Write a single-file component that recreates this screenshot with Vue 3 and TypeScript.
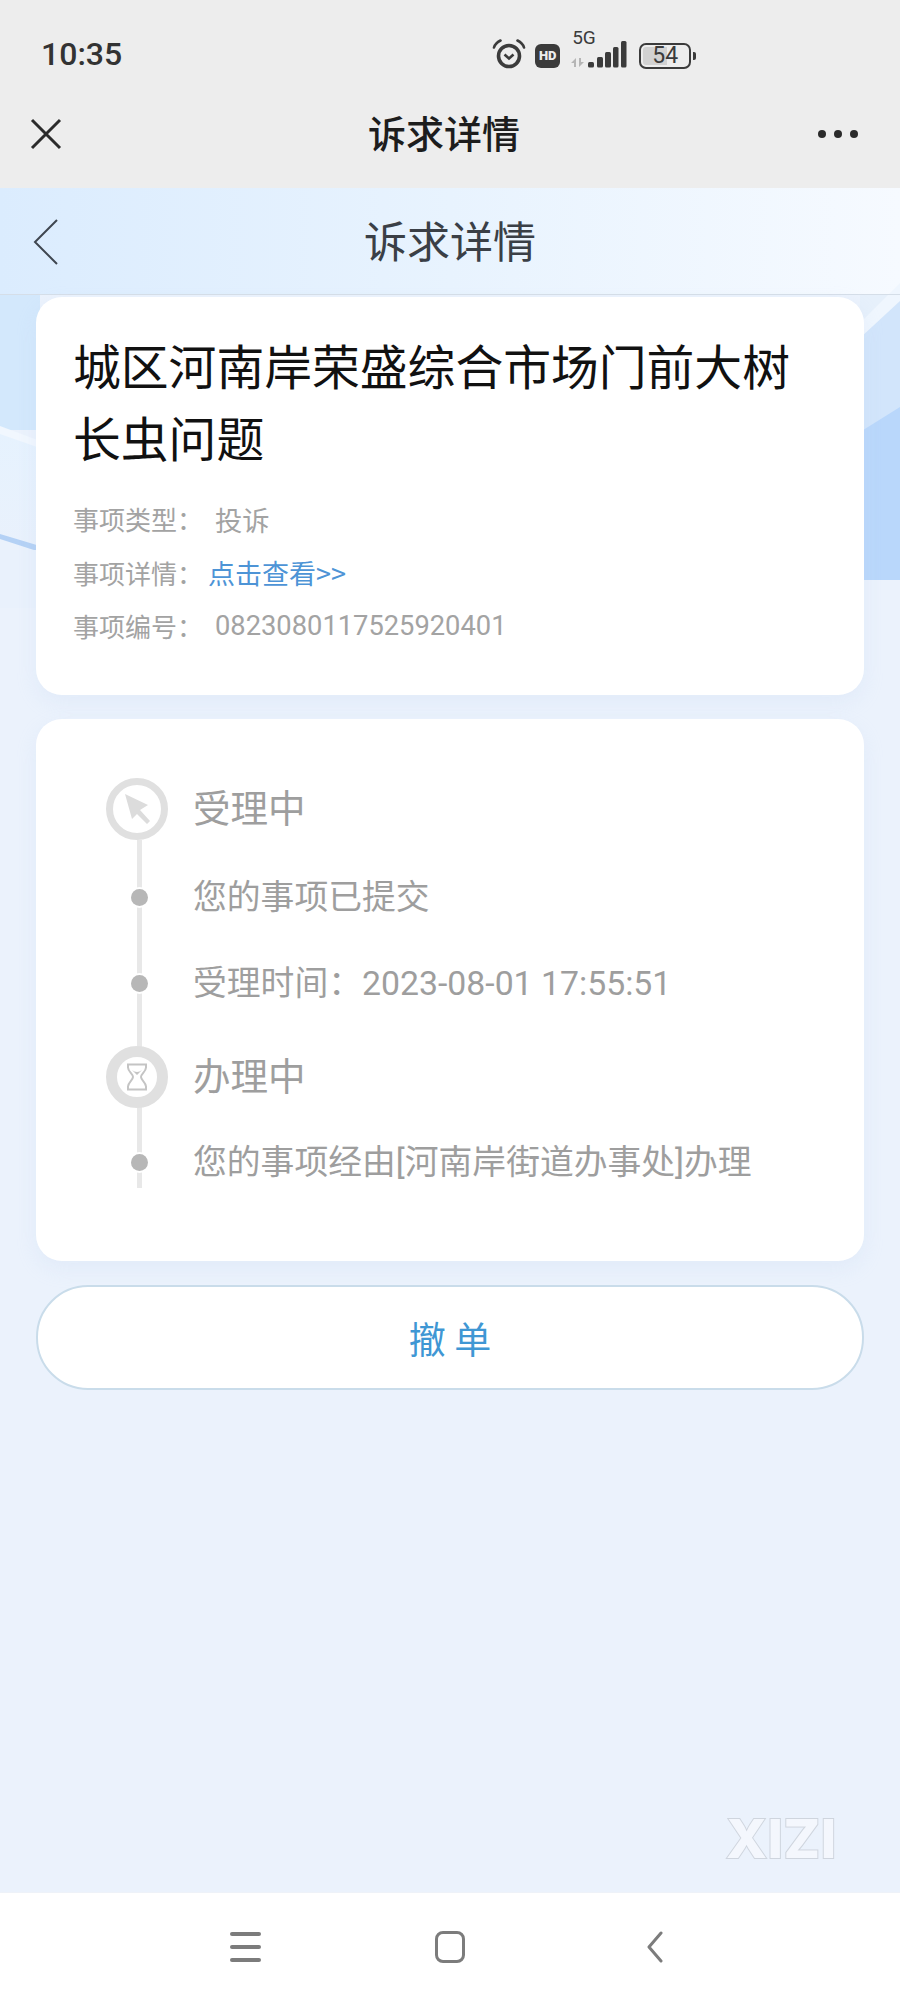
<template>
  <div class="screen">
    <div class="system-top">
      <div class="status-bar">
        <span class="clock">10:35</span>
        <div class="status-icons">
          <svg class="alarm" width="34" height="30" viewBox="0 0 34 30" fill="none" stroke="#3b3b3b">
            <circle cx="17" cy="17" r="10.5" stroke-width="3.6" />
            <path d="M12.5 15.5 17 19.5l4.5-4" stroke-width="2.6" />
            <path d="M2 8.5C3 5 5.5 3 8.5 1.5M32 8.5C31 5 28.5 3 25.5 1.5" stroke-width="2.6" stroke-linecap="round" />
          </svg>
          <span class="hd">HD</span>
          <div class="network">
            <span class="five-g">5G</span>
            <svg width="56" height="27" viewBox="0 0 56 27">
              <path d="M-2 22 3 17V26H1V22ZM11 21 6 26V17H8V21Z" fill="#b5b5b5" />
              <rect x="15" y="21" width="6" height="5.5" rx="1.5" fill="#3b3b3b" />
              <rect x="24" y="16" width="6" height="10.5" rx="1.5" fill="#3b3b3b" />
              <rect x="32" y="11" width="6" height="15.5" rx="1.5" fill="#3b3b3b" />
              <rect x="40" y="6" width="5.5" height="20.5" rx="1.5" fill="#3b3b3b" />
              <rect x="48" y="0" width="5.5" height="26.5" rx="1.5" fill="#3b3b3b" />
            </svg>
          </div>
          <div class="battery">
            <div class="battery-body">
              <div class="battery-fill" :style="{ width: batteryLevel + '%' }"></div>
              <span class="battery-text">{{ batteryLevel }}</span>
            </div>
            <span class="battery-nub"></span>
          </div>
        </div>
      </div>
      <div class="wx-nav">
        <svg width="32" height="32" viewBox="0 0 32 32" stroke="#2b2b2b" stroke-width="3" fill="none">
          <path d="M2 2l28 28M30 2 2 30" />
        </svg>
        <span class="wx-title">诉求详情</span>
        <div class="wx-more"><i></i><i></i><i></i></div>
      </div>
    </div>

    <main class="page">
      <svg class="page-bg" width="900" height="420" viewBox="0 0 900 420">
        <defs>
          <linearGradient id="headBg" x1="0" y1="0" x2="1" y2="0">
            <stop offset="0" stop-color="#dbecfe" />
            <stop offset="0.5" stop-color="#e8f3fe" />
            <stop offset="1" stop-color="#f6faff" />
          </linearGradient>
          <linearGradient id="leftBg" x1="0" y1="0" x2="0" y2="1">
            <stop offset="0" stop-color="#e6f2fe" />
            <stop offset="1" stop-color="#e9f1fc" />
          </linearGradient>
        </defs>
        <rect width="900" height="107" fill="url(#headBg)" />
        <!-- left edge: pale band, white streak, blue streak -->
        <rect y="107" width="40" height="135" fill="#d3e8fc" />
        <path d="M0 244 40 258V360L0 349Z" fill="url(#leftBg)" />
        <path d="M0 238 40 253V260L0 246Z" fill="#f1f7fe" />
        <path d="M0 346 40 358V364L0 351Z" fill="#b4d1f5" />
        <rect y="362" width="40" height="58" fill="#e9f1fc" />
        <!-- right edge: diagonal facets -->
        <rect x="860" y="107" width="40" height="285" fill="#b9d7fb" />
        <path d="M860 107H900V219L860 244Z" fill="#d2e5fb" />
        <path d="M860 107H900L860 148Z" fill="#e6f0fb" />
        <path d="M860 135 900 95V113L860 150Z" fill="#eff6fe" />
      </svg>

      <header class="page-head">
        <svg class="page-back" width="26" height="46" viewBox="0 0 26 46" fill="none" stroke="#3f4650" stroke-width="2">
          <path d="M24 1 2 23l22 22" />
        </svg>
        <h1 class="page-title">诉求详情</h1>
      </header>

      <section class="card info-card">
        <h2 class="subject">城区河南岸荣盛综合市场门前大树长虫问题</h2>
        <div class="meta-row">
          <span class="meta-label">事项类型：</span>
          <span class="meta-value">投诉</span>
        </div>
        <div class="meta-row">
          <span class="meta-label">事项详情：</span>
          <a class="meta-link">点击查看&gt;&gt;</a>
        </div>
        <div class="meta-row">
          <span class="meta-label">事项编号：</span>
          <span class="meta-value">0823080117525920401</span>
        </div>
      </section>

      <section class="card progress-card">
        <div class="timeline">
          <div class="timeline-line"></div>
          <div v-for="step in steps" :key="step.text" class="step" :class="'step-' + step.kind">
            <div class="step-mark">
              <span v-if="step.kind === 'dot'" class="dot"></span>
              <span v-else-if="step.icon === 'cursor'" class="ring ring-thin">
                <svg width="34" height="36" viewBox="0 0 34 36" fill="#dcdcdc">
                  <path d="M5 3 28 14l-8 5 10 11-3 3-10-10-5 5z" />
                </svg>
              </span>
              <span v-else class="ring ring-thick">
                <svg width="22" height="28" viewBox="0 0 22 28" fill="none" stroke="#c4c4c4" stroke-width="2">
                  <path d="M2 1.5h18v3c0 4-5 6.500-5 9.500s5 5.500 5 9.500v3H2v-3c0-4 5-6.500 5-9.500S2 8.500 2 4.500z" />
                  <path d="M6 7c3 2.500 7 2.500 10 0l-5 5z" fill="#c4c4c4" stroke="none" />
                </svg>
              </span>
            </div>
            <span class="step-text">{{ step.text }}</span>
          </div>
        </div>
      </section>

      <button class="revoke">撤 单</button>

      <div class="watermark">XIZI</div>
    </main>

    <nav class="system-nav">
      <div class="nav-menu"><i></i><i></i><i></i></div>
      <span class="nav-home"></span>
      <svg width="18" height="32" viewBox="0 0 18 32" fill="none" stroke="#7c7c7c" stroke-width="3" stroke-linecap="round" stroke-linejoin="round">
        <path d="M15 2 3 16l12 14" />
      </svg>
    </nav>
  </div>
</template>

<script setup lang="ts">
  interface Step {
    kind: 'head' | 'dot';
    text: string;
    icon?: 'cursor' | 'hourglass';
  }

  const batteryLevel = 54;

  const steps: Step[] = [
    { kind: 'head', icon: 'cursor', text: '受理中' },
    { kind: 'dot', text: '您的事项已提交' },
    { kind: 'dot', text: '受理时间：2023-08-01 17:55:51' },
    { kind: 'head', icon: 'hourglass', text: '办理中' },
    { kind: 'dot', text: '您的事项经由[河南岸街道办事处]办理' },
  ];
</script>

<style>
  html,
  body {
    margin: 0;
    background: #ebf2fc;
  }
</style>

<style scoped>
  .screen {
    width: 900px;
    height: 2000px;
    display: flex;
    flex-direction: column;
    overflow: hidden;
    font-family: "Noto Sans CJK SC", "Noto Sans", sans-serif;
  }

  .system-top {
    height: 188px;
    flex: none;
    background: #ededed;
  }

  .status-bar {
    height: 90px;
    padding: 18px 0 0 41px;
    box-sizing: border-box;
    display: flex;
    align-items: center;
  }

  .clock {
    font-family: Roboto, sans-serif;
    font-size: 32px;
    font-weight: 500;
    color: #333;
  }

  .status-icons {
    margin-left: 370px;
    display: flex;
    align-items: flex-end;
    height: 32px;
    color: #3b3b3b;
  }

  .alarm {
    margin-bottom: 1px;
  }

  .hd {
    width: 25px;
    height: 24px;
    margin: 0 13px 2px 9px;
    border-radius: 6px;
    background: #3b3b3b;
    color: #ededed;
    font-family: Roboto, sans-serif;
    font-size: 13px;
    font-weight: 900;
    line-height: 24px;
    text-align: center;
  }

  .network {
    position: relative;
    width: 56px;
    height: 27px;
    margin-bottom: 2px;
  }

  .network svg {
    display: block;
    overflow: visible;
  }

  .five-g {
    position: absolute;
    left: -1px;
    top: -13px;
    font-family: Roboto, sans-serif;
    font-size: 19px;
    line-height: 19px;
  }

  .battery {
    display: flex;
    align-items: center;
    margin: 0 0 1px 10px;
  }

  .battery-body {
    position: relative;
    width: 52px;
    height: 26px;
    box-sizing: border-box;
    border: 2.5px solid #3b3b3b;
    border-radius: 7px;
    padding: 2px;
  }

  .battery-fill {
    height: 100%;
    background: #d2d2d2;
    border-radius: 3px 0 0 3px;
  }

  .battery-text {
    position: absolute;
    inset: 0;
    font-family: Roboto, sans-serif;
    font-size: 23px;
    line-height: 21px;
    text-align: center;
  }

  .battery-nub {
    width: 3px;
    height: 8px;
    margin-left: 2px;
    background: #3b3b3b;
    border-radius: 0 2px 2px 0;
  }

  .wx-nav {
    height: 88px;
    padding: 0 42px 0 30px;
    display: grid;
    grid-template-columns: 1fr auto 1fr;
    align-items: center;
  }

  .wx-title {
    font-size: 38px;
    font-weight: 500;
    color: #1d1d1d;
    line-height: 50px;
    margin-top: -5px;
  }

  .wx-more {
    display: flex;
    justify-content: flex-end;
    gap: 8px;
  }

  .wx-more i {
    width: 8px;
    height: 8px;
    border-radius: 50%;
    background: #2b2b2b;
  }

  .page {
    flex: 1;
    position: relative;
    background: #ebf2fc;
    display: flex;
    flex-direction: column;
    align-items: center;
  }

  .page-bg {
    position: absolute;
    top: 0;
    left: 0;
  }

  .page-head {
    position: relative;
    width: 100%;
    height: 107px;
    flex: none;
    box-sizing: border-box;
    border-bottom: 1px solid #d5dee8;
    display: flex;
    align-items: center;
    justify-content: center;
  }

  .page-back {
    position: absolute;
    left: 33px;
    top: 31px;
  }

  .page-title {
    margin: -4px 0 0;
    font-size: 43px;
    font-weight: 400;
    color: #3a3f46;
  }

  .card {
    position: relative;
    width: 828px;
    box-sizing: border-box;
    flex: none;
    background: #fff;
    border-radius: 26px;
    box-shadow: 0 8px 20px rgba(190, 210, 240, 0.2);
  }

  .info-card {
    height: 398px;
    margin-top: 2px;
    padding: 32px 30px 0 37px;
  }

  .subject {
    margin: 0 0 19px;
    font-size: 47.8px;
    font-weight: 400;
    line-height: 72px;
    color: #111;
  }

  .meta-row {
    display: flex;
    height: 53.5px;
    align-items: center;
    font-size: 26px;
    color: #a3a3a3;
  }

  .meta-label {
    width: 142px;
    flex: none;
  }

  .meta-value {
    font-family: Roboto, "Noto Sans CJK SC", sans-serif;
    font-size: 27.3px;
  }

  .meta-link {
    margin-left: -7px;
    font-size: 27px;
    color: #4d94d6;
  }

  .progress-card {
    height: 542px;
    margin-top: 24px;
    padding: 60px 0 0 71px;
  }

  .timeline {
    position: relative;
  }

  .timeline-line {
    position: absolute;
    left: 30px;
    top: 61px;
    width: 5px;
    height: 348px;
    background: #e8e8e8;
  }

  .step {
    position: relative;
    display: flex;
    align-items: center;
    height: 60px;
  }

  .step-head + .step-dot {
    margin-top: 28px;
  }

  .step-dot + .step-dot {
    margin-top: 26px;
  }

  .step-dot + .step-head {
    margin-top: 34px;
  }

  .step:last-child {
    margin-top: 25px;
  }

  .step-mark {
    width: 62px;
    display: flex;
    justify-content: center;
    flex: none;
  }

  .dot {
    width: 17px;
    height: 17px;
    margin-left: 2px;
    border-radius: 50%;
    background: #b7b7b7;
    box-shadow: 0 0 0 2px #fff;
  }

  .ring {
    box-sizing: border-box;
    margin-left: -2px;
    border-radius: 50%;
    border-style: solid;
    border-color: #e0e0e0;
    background: #fff;
    display: flex;
    align-items: center;
    justify-content: center;
  }

  .ring-thin {
    width: 62px;
    height: 62px;
    border-width: 7px;
  }

  .ring-thick {
    width: 62px;
    height: 62px;
    border-width: 11px;
  }

  .step-text {
    margin-left: 24px;
    font-family: Roboto, "Noto Sans CJK SC", sans-serif;
    font-size: 33.8px;
    color: #9e9e9e;
    white-space: nowrap;
    margin-top: -5px;
  }

  .step-head .step-text {
    font-size: 37.5px;
    margin-top: -8px;
  }

  .revoke {
    width: 828px;
    height: 105px;
    flex: none;
    margin-top: 24px;
    position: relative;
    background: #fff;
    border: 2px solid #c9dcea;
    border-radius: 52px;
    font-family: inherit;
    font-size: 37px;
    color: #3f97d4;
  }

  .watermark {
    position: absolute;
    left: 726px;
    top: 1621px;
    font-family: Inter, sans-serif;
    font-size: 54px;
    font-weight: 800;
    line-height: 60px;
    letter-spacing: 0.5px;
    color: #f4f7fd;
    -webkit-text-stroke: 2px #cfd5de;
    paint-order: stroke fill;
  }

  .system-nav {
    height: 108px;
    flex: none;
    background: #fff;
    border-top: 1px solid #eef2f8;
    box-sizing: border-box;
    display: grid;
    grid-template-columns: repeat(3, 205px);
    justify-content: center;
    justify-items: center;
    align-items: center;
  }

  .nav-menu {
    display: flex;
    flex-direction: column;
    gap: 9px;
  }

  .nav-menu i {
    width: 31px;
    height: 4px;
    border-radius: 2px;
    background: #7c7c7c;
  }

  .nav-home {
    width: 30px;
    height: 32px;
    box-sizing: border-box;
    border: 3px solid #7c7c7c;
    border-radius: 8px;
  }
</style>
